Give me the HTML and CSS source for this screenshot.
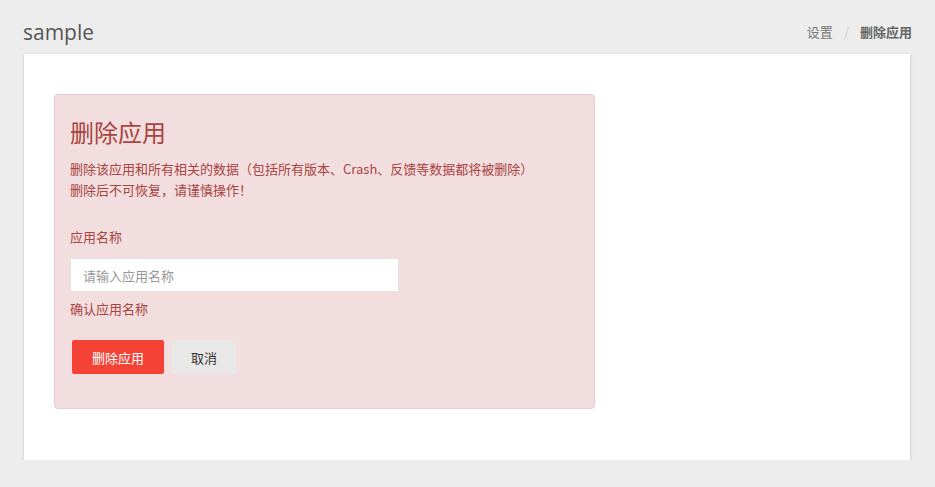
FILE: index.html
```html
<!DOCTYPE html>
<html lang="zh-CN">
<head>
    <meta charset="UTF-8">
    <meta name="viewport" content="width=device-width, initial-scale=1.0">
    <title>sample - 删除应用</title>
    <link rel="stylesheet" href="styles.css">
</head>
<body>
    <div class="page-header">
        <h2 class="app-name">sample</h2>
        <ol class="breadcrumb">
            <li><a href="#">设置</a></li>
            <li class="sep">/</li>
            <li class="active">删除应用</li>
        </ol>
    </div>

    <div class="panel">
        <div class="alert-danger">
            <h3 class="alert-title">删除应用</h3>
            <p class="alert-text">删除该应用和所有相关的数据（包括所有版本、Crash、反馈等数据都将被删除）<br>删除后不可恢复，请谨慎操作！</p>

            <form class="delete-form" onsubmit="return false">
                <label class="form-label" for="appName">应用名称</label>
                <input class="form-input" id="appName" type="text" placeholder="请输入应用名称">
                <div class="form-label confirm">确认应用名称</div>
                <div class="form-actions">
                    <button class="btn btn-danger" type="submit">删除应用</button>
                    <button class="btn btn-default" type="button">取消</button>
                </div>
            </form>
        </div>
    </div>
</body>
</html>
```

FILE: styles.css
```css
body {
    margin: 0;
    padding: 0 24px 0 24px;
    background: #ededed;
    font-family: "Open Sans", "Noto Sans CJK SC", sans-serif;
    font-size: 13px;
    color: #555;
}
.page-header {
    display: flex;
    justify-content: space-between;
    align-items: center;
    height: 54px;
    padding-top: 10px;
    box-sizing: border-box;
}
.app-name {
    margin: 0 0 0 -1px;
    font-size: 21px;
    font-weight: normal;
    color: #555;
}
.breadcrumb {
    display: flex;
    gap: 10px;
    list-style: none;
    margin: 0 -1px 0 0;
    padding: 0;
    font-family: "Noto Sans CJK SC", sans-serif;
    font-size: 13px;
    transform: translateY(-1px);
}
.breadcrumb a {
    color: #777;
    text-decoration: none;
}
.breadcrumb .sep {
    color: #ccc;
    margin: 0 1px;
}
.breadcrumb .active {
    color: #666;
    font-weight: bold;
}
.panel {
    background: #fff;
    padding: 40px 30px 51px;
    box-shadow: 0 1px 3px rgba(0,0,0,0.2);
    width: 886px;
    box-sizing: border-box;
}
.alert-danger {
    width: 541px;
    box-sizing: border-box;
    background: #f2dede;
    border: 1px solid #ebccd1;
    border-radius: 4px;
    color: #a94442;
    padding: 22px 15px 34px;
    font-family: "Noto Sans CJK SC", sans-serif;
}
.alert-title {
    margin: 0;
    font-size: 24px;
    font-weight: normal;
    line-height: 30px;
}
.alert-text {
    margin: 11px 0 0;
    font-size: 13px;
    line-height: 21px;
}
.delete-form {
    display: flex;
    flex-direction: column;
    align-items: flex-start;
    margin-top: 27px;
}
.form-label {
    font-size: 13px;
    line-height: 20px;
}
.form-input {
    margin-top: 11px;
    width: 329px;
    height: 34px;
    box-sizing: border-box;
    border: 1px solid #e3e3e3;
    background: #fff;
    padding: 0 12px;
    font-family: "Noto Sans CJK SC", sans-serif;
    font-size: 13px;
    color: #555;
    outline: none;
}
.form-input::placeholder {
    color: #999;
}
.confirm {
    margin-top: 7px;
}
.form-actions {
    display: flex;
    gap: 8px;
    margin-top: 21px;
    padding-left: 2px;
}
.btn {
    height: 34px;
    border: none;
    border-radius: 2px;
    font-family: "Noto Sans CJK SC", sans-serif;
    font-size: 13px;
    cursor: pointer;
}
.btn-danger {
    width: 92px;
    background: #f44336;
    color: #fff;
}
.btn-default {
    width: 64px;
    background: #e8e8e8;
    color: #333;
}
```
